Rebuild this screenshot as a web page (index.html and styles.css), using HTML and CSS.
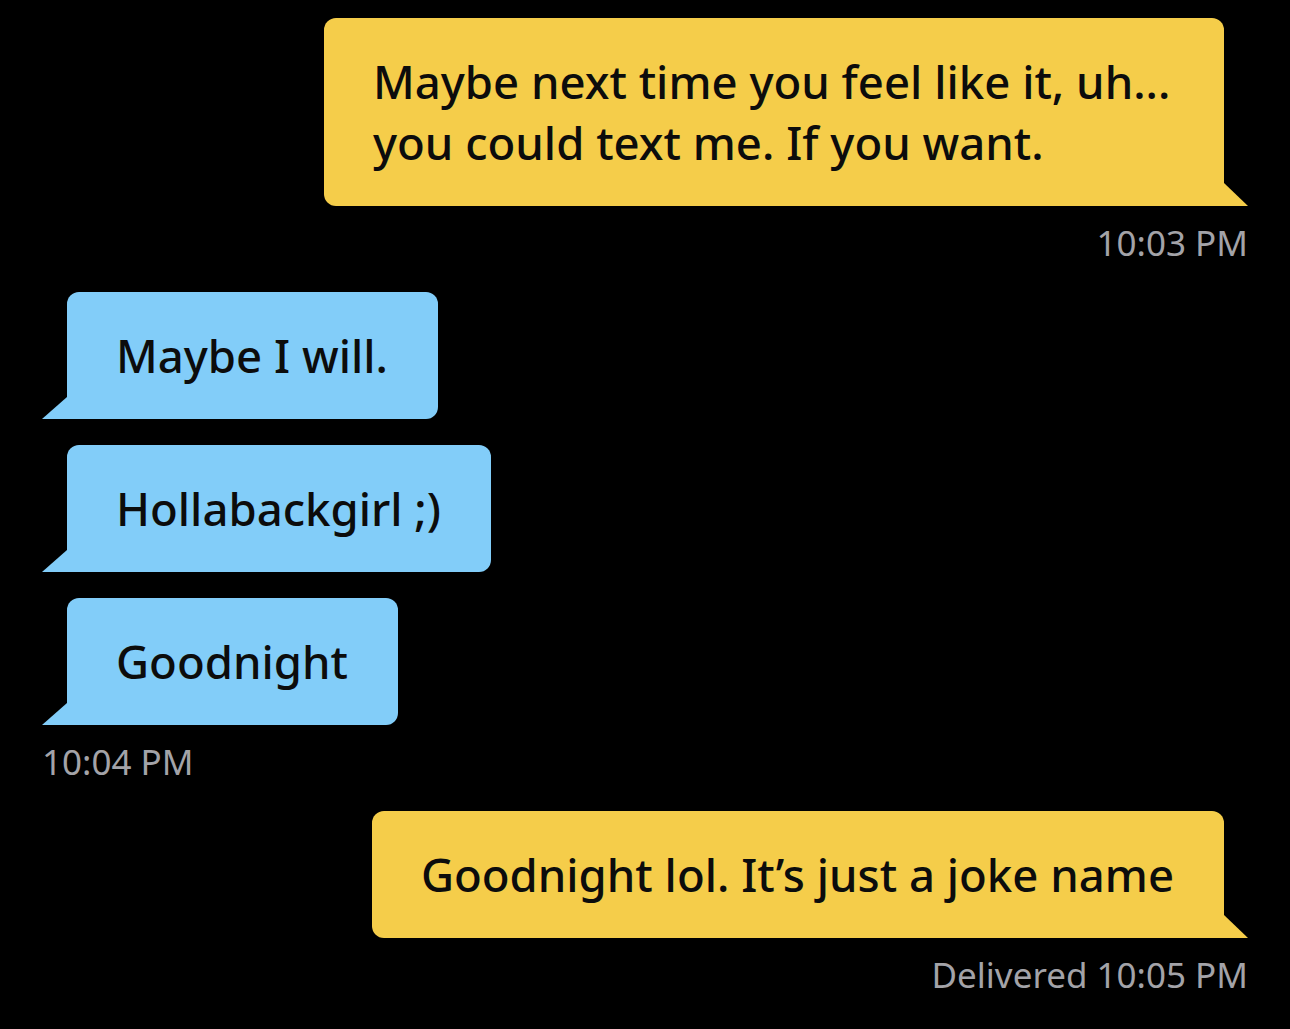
FILE: index.html
```html
<!DOCTYPE html>
<html lang="en">
<head>
<meta charset="utf-8">
<title>Chat</title>
<link rel="stylesheet" href="styles.css">
</head>
<body>
<main class="chat">
  <div class="row out">
    <div class="bubble bubble-out">Maybe next time you feel like it, uh... you could text me. If you want.</div>
  </div>
  <div class="stamp stamp-out">10:03 PM</div>

  <div class="row in first">
    <div class="bubble bubble-in">Maybe I will.</div>
  </div>
  <div class="row in">
    <div class="bubble bubble-in">Hollabackgirl ;)</div>
  </div>
  <div class="row in">
    <div class="bubble bubble-in">Goodnight</div>
  </div>
  <div class="stamp stamp-in">10:04 PM</div>

  <div class="row out">
    <div class="bubble bubble-out">Goodnight lol. It’s just a joke name</div>
  </div>
  <div class="stamp stamp-out">Delivered 10:05 PM</div>
</main>
</body>
</html>
```
FILE: styles.css
```css
html, body {
  margin: 0;
  background: #000;
}

body {
  font-family: "Noto Sans", "Open Sans", sans-serif;
}

.chat {
  display: flex;
  flex-direction: column;
  padding: 18px 42px 0 42px;
}

.row {
  display: flex;
}

.row.out {
  justify-content: flex-end;
}

.row.in {
  justify-content: flex-start;
  margin-top: 26px;
}

.row.in.first {
  margin-top: 29px;
}

.stamp + .row.out {
  margin-top: 29px;
}

.bubble {
  position: relative;
  box-sizing: border-box;
  max-width: 900px;
  padding: 33px 50px 33px 49px;
  font-size: 45.5px;
  font-weight: 500;
  line-height: 61px;
  color: #0c0c0c;
  border-radius: 12px;
}

.bubble-out {
  background: #f5cd4a;
  margin-right: 24px;
  border-bottom-right-radius: 0;
}

.bubble-out::after {
  content: "";
  position: absolute;
  right: -24px;
  bottom: 0;
  width: 24px;
  height: 23px;
  background: #f5cd4a;
  clip-path: polygon(0 0, 100% 100%, 0 100%);
}

.bubble-in {
  background: #82cdf9;
  margin-left: 25px;
  border-bottom-left-radius: 0;
}

.bubble-in::after {
  content: "";
  position: absolute;
  left: -25px;
  bottom: 0;
  width: 25px;
  height: 22px;
  background: #82cdf9;
  clip-path: polygon(100% 0, 100% 100%, 0 100%);
}

.stamp {
  margin-top: 17px;
  font-size: 35px;
  font-weight: 400;
  line-height: 40px;
  color: #a3a3a8;
}

.stamp-out {
  text-align: right;
}

.stamp-in {
  text-align: left;
}
```
